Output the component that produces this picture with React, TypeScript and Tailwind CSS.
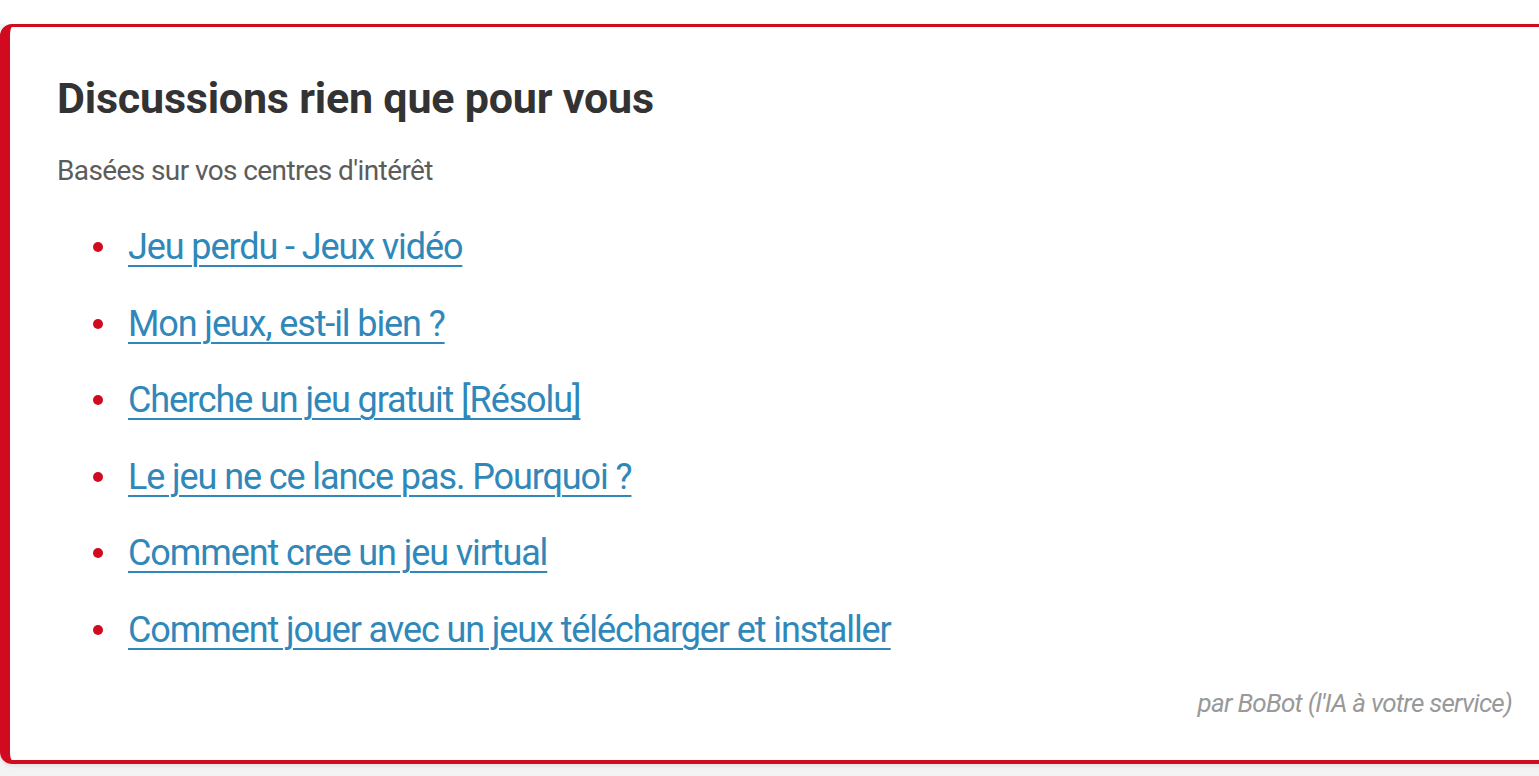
import React from 'react';

const topics = [
  'Jeu perdu - Jeux vidéo',
  'Mon jeux, est-il bien ?',
  'Cherche un jeu gratuit [Résolu]',
  'Le jeu ne ce lance pas. Pourquoi ?',
  'Comment cree un jeu virtual',
  'Comment jouer avec un jeux télécharger et installer',
];

const App: React.FC = () => {
  return (
    <div className="h-[776px] overflow-hidden bg-[#f3f3f3] font-['Roboto',sans-serif]">
      <div className="h-[24px] bg-white" />
      <div className="w-[1555px] h-[740px] bg-white rounded-[12px] border-[#d10a1f] border-t-[3px] border-b-[4px] border-l-[10px] border-r-[4px] shadow-[0_2px_4px_rgba(0,0,0,0.08)] pl-[47px] pr-[39px] pt-[40px] flex flex-col">
        <h2 className="text-[43px] leading-[62px] font-bold text-[#333333] tracking-[-0.2px]">
          Discussions rien que pour vous
        </h2>
        <p className="mt-[25px] text-[28px] leading-[34px] text-[#5c5c5c] tracking-[-0.6px]">
          Basées sur vos centres d'intérêt
        </p>
        <ul className="mt-[36px] flex flex-col gap-[30.5px]">
          {topics.map((t) => (
            <li key={t} className="flex items-center pl-[36px]">
              <span className="w-[10px] h-[10px] rounded-full bg-[#d10a1f] mr-[25px] shrink-0" />
              <a
                href="#"
                className="text-[36px] leading-[46px] text-[#2f88b9] underline underline-offset-[6px] decoration-[2px] tracking-[-1.1px]"
              >
                {t}
              </a>
            </li>
          ))}
        </ul>
        <div className="mt-auto mb-[40px] text-right text-[26px] leading-[34px] italic text-[#999999] tracking-[-0.75px]">
          par BoBot (l'IA à votre service)
        </div>
      </div>
    </div>
  );
};

export default App;
